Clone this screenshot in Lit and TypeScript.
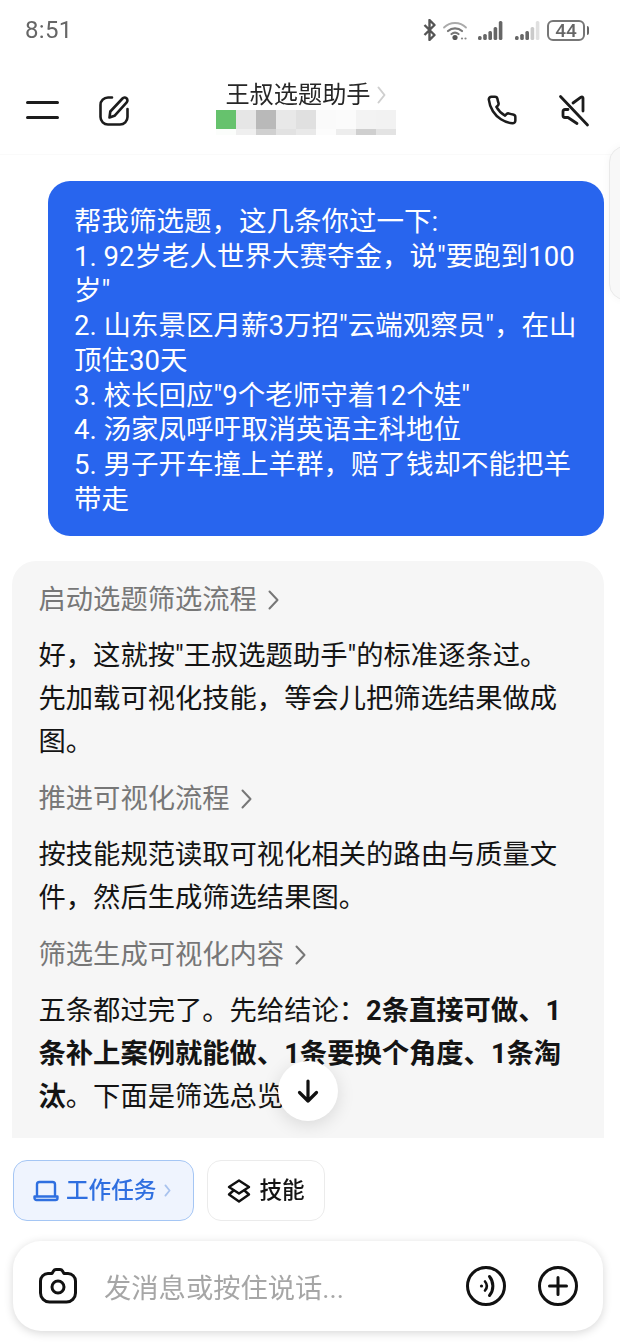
import { LitElement, html, css, svg } from "lit";
import { customElement } from "lit/decorators.js";

const TOP = ["#66c26d", "#e6e6e6", "#b9b9b9", "#e8e8e8", "#e0e0e0", "#fafafa", "#fbfbfb", "#f3f3f3", "#f2f2f2"];
const BOTTOM = ["#fbfdfb", "#efefef", "#d0d0d0", "#e2e2e2", "#e9e9e9", "#fcfcfc", "#ededed", "#cfcfcf", "#e3e3e3"];

const bars = (op: number[]) =>
  [0, 1, 2, 3, 4].map((i) => {
    const h = [4, 6, 9, 13, 19][i];
    return svg`<rect x=${i * 5.2} y=${20 - h} width="3.6" height=${h} rx="1.5" fill="#666" opacity=${op[i]}></rect>`;
  });

@customElement("app-root")
export class AppRoot extends LitElement {
  static styles = css`
    :host {
      display: block;
      width: 620px;
      height: 1344px;
      background: #fff;
      font-family: Roboto, "Noto Sans CJK SC", sans-serif;
      color: #141414;
    }
    .page {
      position: relative;
      display: flex;
      flex-direction: column;
      width: 620px;
      height: 1344px;
      overflow: hidden;
      filter: blur(0.4px);
    }
    .status {
      flex: none;
      height: 60px;
      display: flex;
      align-items: center;
      justify-content: space-between;
      padding: 0 35px 1px 25px;
      color: #666;
    }
    .time { font-size: 24px; letter-spacing: 0.3px; }
    .status-icons { display: flex; align-items: center; gap: 8px; }
    .status svg { display: block; }
    .wifi { margin: 0 2px 0 -3px; }
    .sim2 { margin-left: 3px; margin-right: -2px; }
    .battery {
      position: relative;
      box-sizing: border-box;
      width: 38px;
      height: 21px;
      border: 2px solid #777;
      border-radius: 6px;
      display: flex;
      align-items: center;
      justify-content: center;
      font-size: 19px;
      font-weight: 500;
      color: #666;
      line-height: 1;
    }
    .battery::after {
      content: "";
      position: absolute;
      right: -6px;
      top: 4px;
      width: 2px;
      height: 9px;
      border-radius: 0 2px 2px 0;
      background: #666;
    }
    .header {
      flex: none;
      height: 94px;
      box-sizing: border-box;
      display: grid;
      grid-template-columns: 1fr auto 1fr;
      align-items: center;
      padding: 0 30px 0 26px;
      border-bottom: 1px solid #fafafa;
    }
    .left, .right { display: flex; align-items: center; }
    .left { gap: 39px; padding-top: 5px; }
    .right { justify-content: flex-end; gap: 40px; padding-top: 5px; }
    .left svg, .right svg { display: block; }
    .center { display: flex; flex-direction: column; align-items: center; margin-right: 5px; }
    .title {
      display: flex;
      align-items: center;
      gap: 6px;
      font-size: 24.2px;
      line-height: 29px;
      color: #262626;
    }
    .mosaic { display: grid; grid-template-columns: repeat(9, 20px); grid-template-rows: 19px 6px; }
    .edge {
      position: absolute;
      left: 609px;
      top: 146px;
      width: 40px;
      height: 154px;
      box-sizing: border-box;
      border: 1px solid #e9e9e9;
      border-radius: 16px;
      background: #f8f8f8;
      box-shadow: 0 0 8px rgba(0, 0, 0, 0.04);
    }
    .chat {
      flex: 1;
      min-height: 0;
      overflow: hidden;
      display: flex;
      flex-direction: column;
      gap: 25px;
      padding: 26px 16px 0 12px;
    }
    .bubble {
      flex: none;
      margin-left: 36px;
      box-sizing: border-box;
      padding: 24px 26px 19px;
      background: #2865ee;
      border-radius: 22px;
      color: #fff;
      font-size: 27.5px;
      line-height: 34.7px;
    }
    .card {
      flex: 1;
      min-height: 0;
      overflow: hidden;
      box-sizing: border-box;
      padding: 17.5px 36px 0 26.5px;
      background: #f6f6f6;
      border-radius: 24px 24px 0 0;
      display: flex;
      flex-direction: column;
      gap: 13.5px;
      font-size: 27.3px;
      line-height: 43px;
    }
    .step { display: flex; align-items: center; gap: 11px; color: #777; flex: none; }
    .para { flex: none; margin: 0; }
    b { font-weight: 700; }
    .scroll {
      position: absolute;
      left: 278px;
      top: 1061px;
      width: 60px;
      height: 60px;
      border-radius: 50%;
      background: #fff;
      box-shadow: 0 4px 18px rgba(0, 0, 0, 0.12);
      display: flex;
      align-items: center;
      justify-content: center;
    }
    .chips { flex: none; display: flex; gap: 13px; padding: 22px 0 0 13px; }
    .chip {
      box-sizing: border-box;
      height: 61px;
      display: flex;
      align-items: center;
      border-radius: 14px;
      font-size: 22.6px;
      font-weight: 500;
      border: 1.5px solid #ebebeb;
      padding: 0 19px 0 19px;
      gap: 8px;
      background: #fff;
    }
    .chip span { margin-bottom: 4px; }
    .chip.active {
      background: #eff4fe;
      border-color: #a5c6f4;
      color: #2f6fe0;
      padding: 0 22px 0 19px;
      gap: 7px;
    }
    .chip.active span { margin-right: 1px; }
    .composer {
      flex: none;
      margin: 20px 17px 13px 13px;
      height: 90px;
      box-sizing: border-box;
      border-radius: 28px;
      background: #fff;
      box-shadow: 0 2px 10px rgba(0, 0, 0, 0.16);
      display: flex;
      align-items: center;
      padding: 0 25px 0 26px;
    }
    .placeholder { flex: 1; font-size: 27.3px; color: #a6a6a6; padding-left: 27px; }
    .composer svg { display: block; flex: none; }
    .composer .plus { margin-left: 32px; }
  `;

  render() {
    const chevron = (w: number, h: number, c: string, sw: number) => html`
      <svg width=${w} height=${h} viewBox="0 0 ${w} ${h}" fill="none" stroke=${c} stroke-width=${sw} stroke-linecap="round" stroke-linejoin="round">
        <path d="M${sw / 2 + 0.5} ${sw / 2 + 0.5}L${w - sw / 2 - 0.5} ${h / 2}L${sw / 2 + 0.5} ${h - sw / 2 - 0.5}"></path>
      </svg>`;
    return html`
      <div class="page">
        <div class="status">
          <span class="time">8:51</span>
          <div class="status-icons">
            <svg width="14" height="22" viewBox="0 0 14 22" fill="none" stroke="#555" stroke-width="2.4" stroke-linejoin="round">
              <path d="M1.5 6l10 10-5 5V1l5 5-10 10"></path>
            </svg>
            <svg class="wifi" width="26" height="20" viewBox="0 0 26 20" fill="none" stroke="#777" stroke-linecap="round">
              <path d="M2 7.5C8 1.5 18 1.5 24 7.5" stroke-width="1.8" stroke="#aaa"></path>
              <path d="M6 11c4-3.6 10-3.6 14 0" stroke-width="2.2"></path>
              <path d="M9.5 14c2-1.6 5-1.6 7 0" stroke-width="2.2"></path>
              <circle cx="13" cy="17.5" r="2.6" fill="#555" stroke="none"></circle>
              <circle cx="20" cy="18.5" r="1.1" fill="#888" stroke="none"></circle>
              <circle cx="23.5" cy="18.5" r="1.1" fill="#888" stroke="none"></circle>
            </svg>
            <svg width="26" height="20" viewBox="0 0 26 20">${bars([1, 1, 1, 1, 1])}</svg>
            <svg class="sim2" width="26" height="20" viewBox="0 0 26 20">${bars([1, 1, 1, 0.35, 0.2])}</svg>
            <div class="battery">44</div>
          </div>
        </div>

        <div class="header">
          <div class="left">
            <svg width="33" height="24" viewBox="0 0 33 24" stroke="#1c1c1c" stroke-width="3" stroke-linecap="round">
              <path d="M1.5 4.5h30M1.5 19.5h30"></path>
            </svg>
            <svg width="33" height="33" viewBox="0 0 33 33" fill="none" stroke="#1c1c1c" stroke-width="2.6" stroke-linecap="round" stroke-linejoin="round">
              <path d="M14 3.5H10a7.5 7.5 0 0 0-7.5 7.5v12A7.5 7.5 0 0 0 10 30.500h12a7.500 7.500 0 0 0 7.500-7.500v-8"></path>
              <path d="M11.500 23.500l.8-6L24.500 4.500a2.800 2.800 0 0 1 4.200 3.800L16.500 21.800z"></path>
            </svg>
          </div>
          <div class="center">
            <div class="title">王叔选题助手 ${chevron(9, 18, "#cfcfcf", 2)}</div>
            <div class="mosaic">
              ${TOP.map((c) => html`<span style="background:${c}"></span>`)}
              ${BOTTOM.map((c) => html`<span style="background:${c}"></span>`)}
            </div>
          </div>
          <div class="right">
            <svg width="32" height="32" viewBox="0 0 24 24" fill="none" stroke="#1c1c1c" stroke-width="1.9" stroke-linecap="round" stroke-linejoin="round">
              <path d="M22 17.500v2.500a2 2 0 0 1-2.180 2 19.790 19.790 0 0 1-8.630-3.070 19.500 19.500 0 0 1-6-6 19.790 19.790 0 0 1-3.070-8.670A2 2 0 0 1 4.110 2h2.500a2 2 0 0 1 2 1.720c.130.960.360 1.900.700 2.810a2 2 0 0 1-.450 2.110L7.800 9.700a16 16 0 0 0 6.500 6.500l1.060-1.060a2 2 0 0 1 2.110-.450c.910.340 1.850.570 2.810.700A2 2 0 0 1 22 17.500z"></path>
            </svg>
            <svg width="32" height="33" viewBox="0 0 32 33" fill="none" stroke="#1c1c1c" stroke-width="2.8" stroke-linecap="round" stroke-linejoin="round">
              <path d="M2.500 2.500l27 28.500"></path>
              <path d="M25 17V4c0-1-1-1.500-2-.8L15 9"></path>
              <path d="M10 15.500H7a2 2 0 0 0-2 2v4a2 2 0 0 0 2 2h3l9 6"></path>
            </svg>
          </div>
        </div>

        <div class="chat">
          <div class="bubble">
            <div>帮我筛选题，这几条你过一下:</div>
            <div>1. 92岁老人世界大赛夺金，说"要跑到100岁"</div>
            <div>2. 山东景区月薪3万招"云端观察员"，在山顶住30天</div>
            <div>3. 校长回应"9个老师守着12个娃"</div>
            <div>4. 汤家凤呼吁取消英语主科地位</div>
            <div>5. 男子开车撞上羊群，赔了钱却不能把羊带走</div>
          </div>
          <div class="card">
            <div class="step">启动选题筛选流程 ${chevron(11, 20, "#777", 2)}</div>
            <p class="para">好，这就按"王叔选题助手"的标准逐条过。先加载可视化技能，等会儿把筛选结果做成图。</p>
            <div class="step">推进可视化流程 ${chevron(11, 20, "#777", 2)}</div>
            <p class="para">按技能规范读取可视化相关的路由与质量文件，然后生成筛选结果图。</p>
            <div class="step">筛选生成可视化内容 ${chevron(11, 20, "#777", 2)}</div>
            <p class="para">五条都过完了。先给结论：<b>2条直接可做、1条补上案例就能做、1条要换个角度、1条淘汰</b>。下面是筛选总览</p>
          </div>
        </div>

        <div class="chips">
          <div class="chip active">
            <svg width="26" height="22" viewBox="0 0 26 22" fill="none" stroke="#2f6fe0" stroke-width="2.4" stroke-linecap="round" stroke-linejoin="round">
              <path d="M4 16V4.500A2.500 2.500 0 0 1 6.500 2h13A2.500 2.500 0 0 1 22 4.500V16"></path>
              <path d="M1.500 16.500h23v1.500a2 2 0 0 1-2 2h-19a2 2 0 0 1-2-2z"></path>
            </svg>
            <span>工作任务</span>
            ${chevron(7, 13, "#a9c3ee", 1.8)}
          </div>
          <div class="chip">
            <svg width="24" height="24" viewBox="0 0 24 24" fill="none" stroke="#111" stroke-width="2.4" stroke-linecap="round" stroke-linejoin="round">
              <path d="M12 1.500l10 6.500-10 6.500L2 8z"></path>
              <path d="M6.500 11.500L2 15.500l10 7 10-7-4.500-4"></path>
            </svg>
            <span>技能</span>
          </div>
        </div>

        <div class="composer">
          <svg width="38" height="36" viewBox="0 0 38 36" fill="none" stroke="#111" stroke-width="3" stroke-linejoin="round">
            <path d="M13 5.500l1.500-2.500a3 3 0 0 1 2.500-1.500h4a3 3 0 0 1 2.500 1.500L25 5.500h4a7.500 7.500 0 0 1 7.500 7.500v12a9 9 0 0 1-9 9h-17a9 9 0 0 1-9-9V13A7.500 7.500 0 0 1 9 5.500z"></path>
            <circle cx="19" cy="19" r="6"></circle>
          </svg>
          <span class="placeholder">发消息或按住说话...</span>
          <svg width="40" height="40" viewBox="0 0 40 40" fill="none" stroke="#111" stroke-width="3" stroke-linecap="round">
            <circle cx="20" cy="20" r="18.500"></circle>
            <circle cx="15.500" cy="20" r="1.600" fill="#111" stroke="none"></circle>
            <path d="M19 15.500c2.500 3 2.500 6 0 9" stroke-width="2.6"></path>
            <path d="M23.500 10.500c4.500 5.500 4.500 13.500 0 19" stroke-width="3"></path>
          </svg>
          <svg class="plus" width="40" height="40" viewBox="0 0 40 40" fill="none" stroke="#111" stroke-width="3" stroke-linecap="round">
            <circle cx="20" cy="20" r="18.500"></circle>
            <path d="M20 11.500v17M11.500 20h17"></path>
          </svg>
        </div>

        <div class="edge"></div>
        <div class="scroll">
          <svg width="24" height="26" viewBox="0 0 24 26" fill="none" stroke="#111" stroke-width="3.2" stroke-linecap="round" stroke-linejoin="round">
            <path d="M12 3v20M3.500 14.500L12 23l8.500-8.500"></path>
          </svg>
        </div>
      </div>
    `;
  }
}
